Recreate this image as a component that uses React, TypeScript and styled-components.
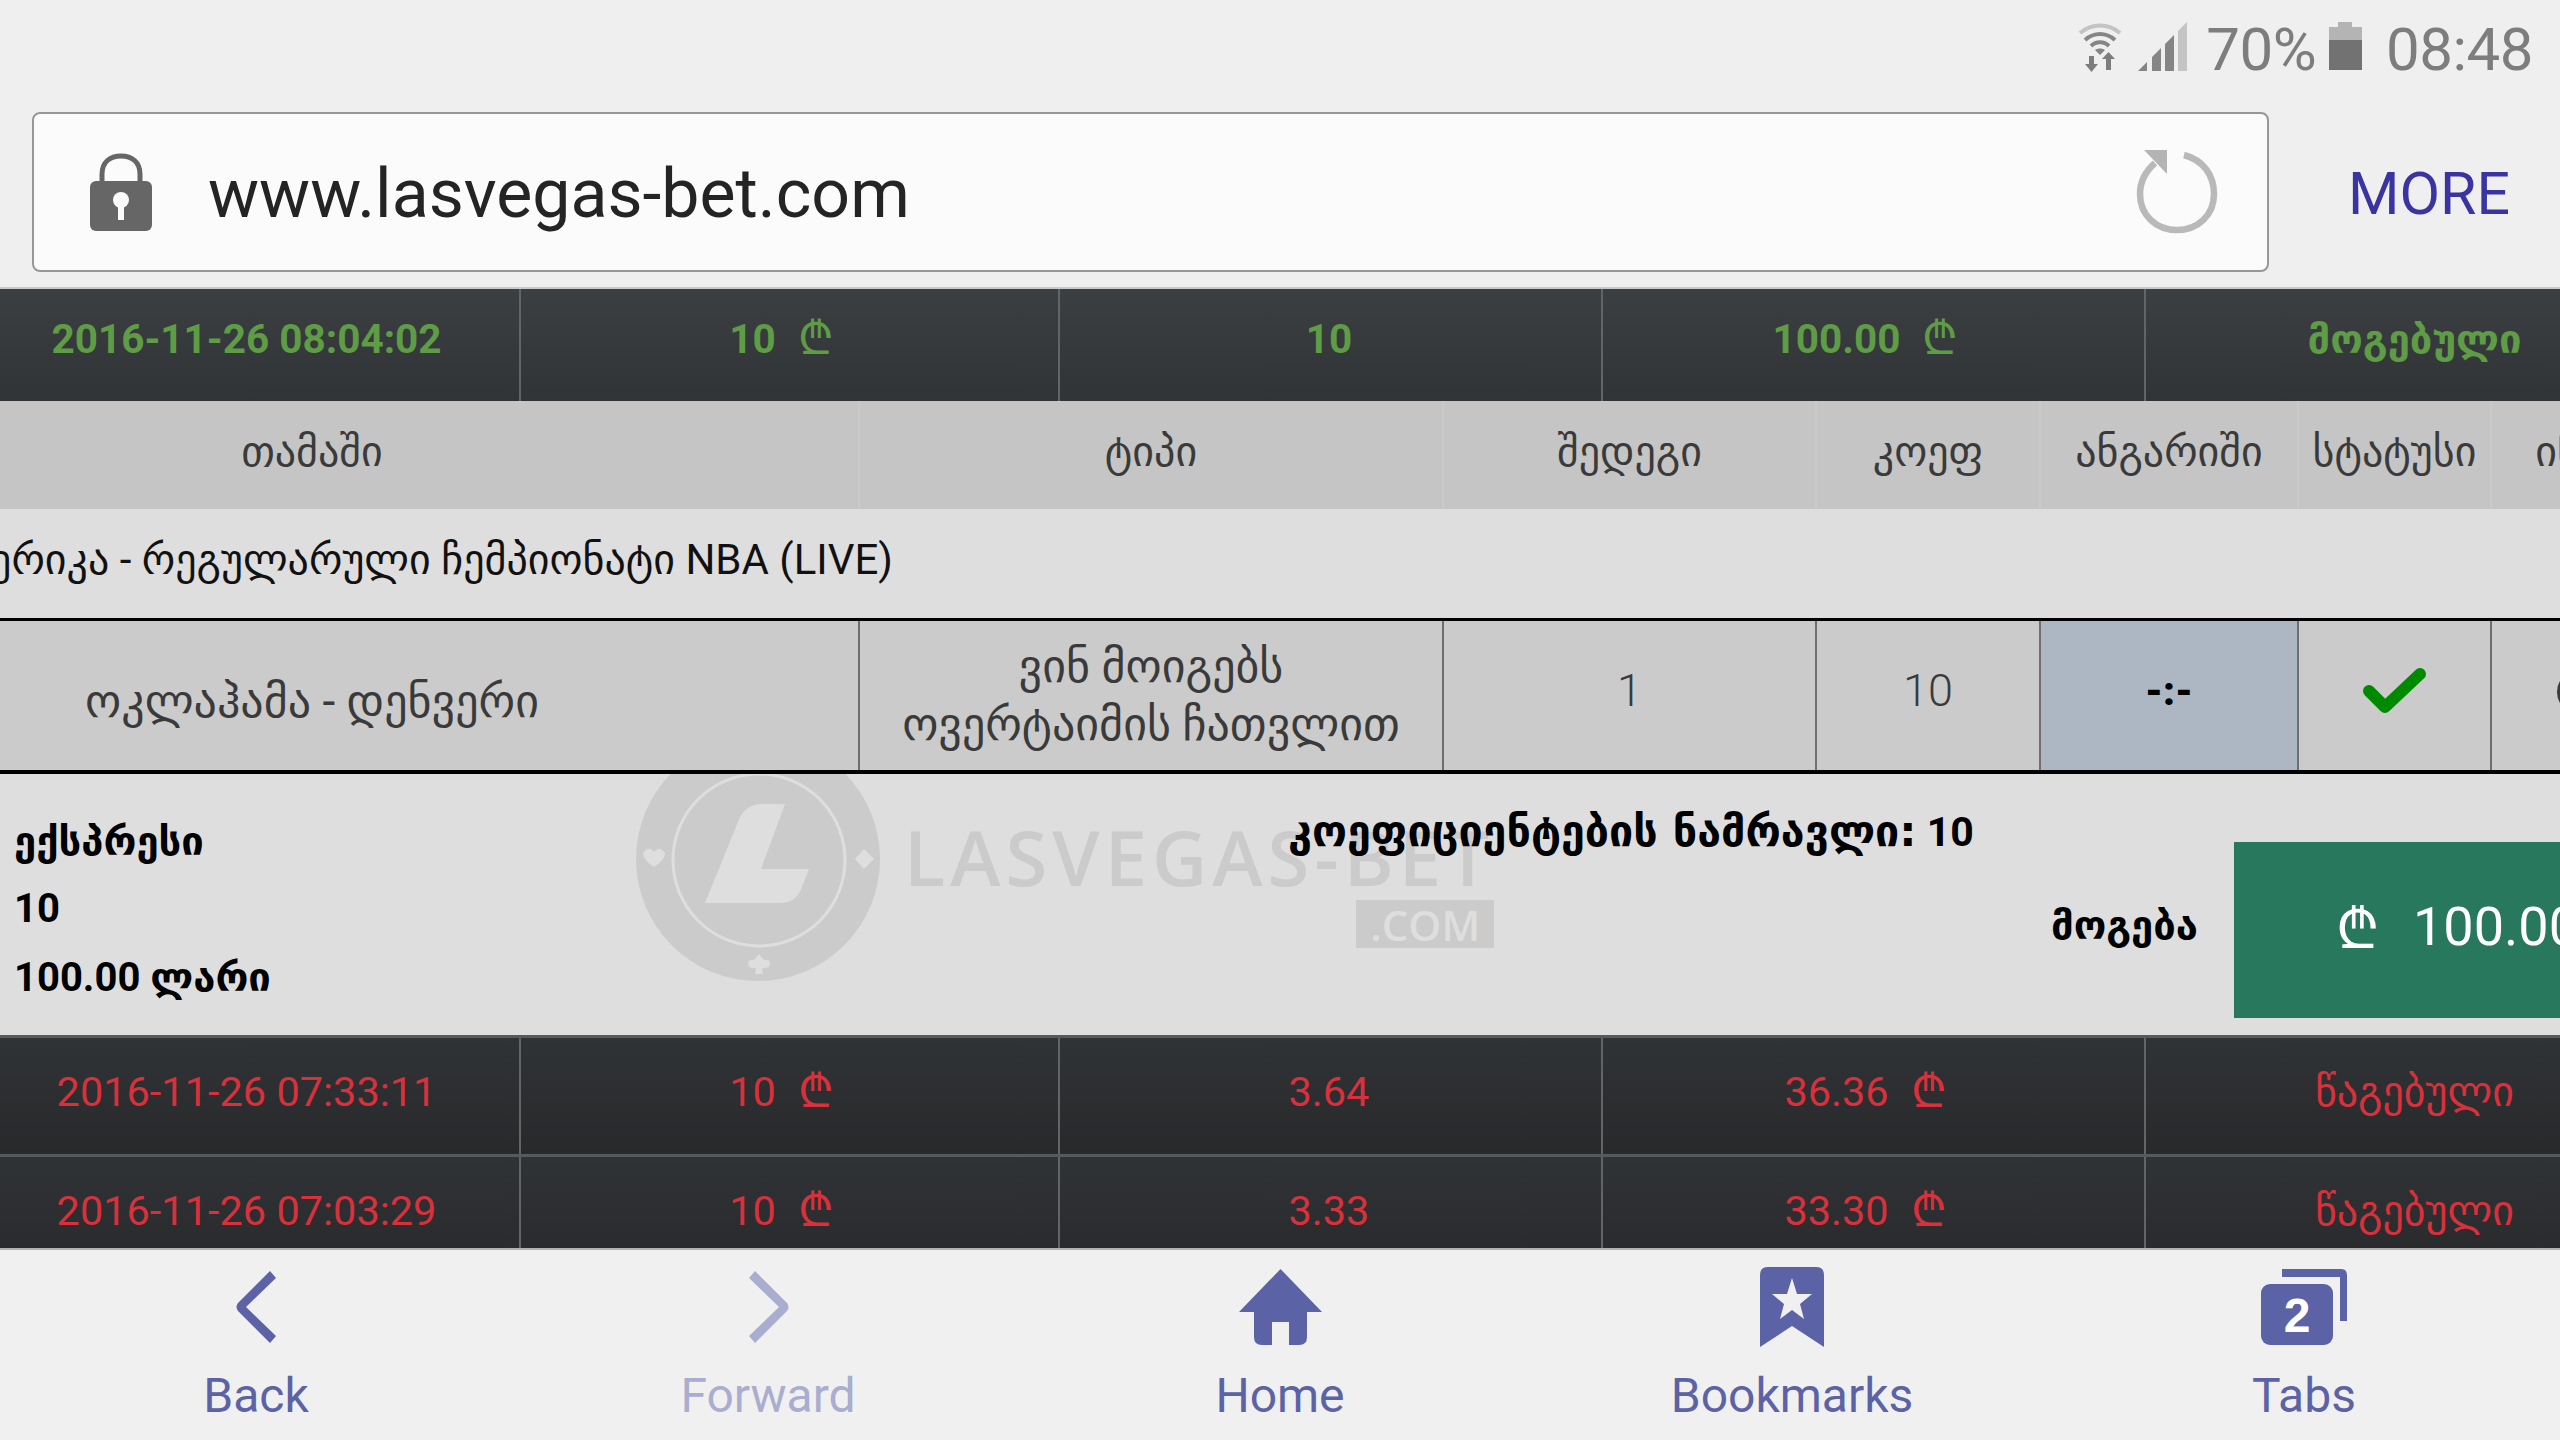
import React from "react";
import styled, { createGlobalStyle } from "styled-components";

const Global = createGlobalStyle`
  html, body { margin: 0; padding: 0; background: #efefef; }
  * { box-sizing: border-box; }
  body { font-family: Roboto, "DejaVu Sans", sans-serif; }
`;

const Page = styled.div`
  width: 2560px;
  height: 1440px;
  overflow: hidden;
  display: flex;
  flex-direction: column;
  background: #efefef;
`;

const StatusBar = styled.div`
  height: 112px;
  flex: none;
  display: flex;
  justify-content: flex-end;
  align-items: flex-start;
  padding: 22px 27px 0 0;
  color: #7d7d7d;
`;

const StatusSlot = styled.span<{ $gap: number }>`
  display: flex;
  margin-left: ${(p) => p.$gap}px;
`;

const StatusText = styled.span`
  font-size: 60px;
  line-height: 56px;
  font-weight: 400;
  letter-spacing: -0.5px;
`;

const AddressRow = styled.div`
  height: 175px;
  flex: none;
  padding: 0 50px 15px 32px;
  display: flex;
  align-items: stretch;
`;

const AddressBox = styled.div`
  width: 2237px;
  flex: none;
  display: flex;
  align-items: center;
  padding: 0 48px 0 56px;
  background: #fbfbfb;
  border: 2px solid #979797;
  border-radius: 8px;
`;

const Url = styled.span`
  flex: 1;
  margin-left: 56px;
  padding-top: 3px;
  font-size: 68px;
  color: #242424;
`;

const More = styled.span`
  margin-left: auto;
  align-self: center;
  padding-top: 2px;
  font-size: 59px;
  color: #3a34a2;
`;

const Table = styled.div`
  flex: 1;
  min-height: 0;
  overflow: hidden;
  display: flex;
  flex-direction: column;
`;

const Grid = styled.div<{ $cols: string; $offset: number }>`
  flex: none;
  display: grid;
  grid-template-columns: ${(p) => p.$cols};
  margin-left: ${(p) => p.$offset}px;
  width: max-content;
`;

const BetCols = "542px 539px 543px 543px 542px";
const MatchCols = "1092px 584px 373px 224px 258px 193px 200px";

const BetRow = styled(Grid)<{ $win?: boolean; $h: number; $topH: number }>`
  height: ${(p) => p.$h}px;
  min-width: 2900px;
  background: ${(p) =>
    p.$win
      ? "linear-gradient(#3c3f42, #313437)"
      : "linear-gradient(#303336, #28292b)"};
  border-top: ${(p) => p.$topH}px solid ${(p) => (p.$win ? "#c9c9c9" : "#58595b")};
  color: ${(p) => (p.$win ? "#5e9c45" : "#d8313b")};
  font-size: ${(p) => (p.$win ? 40.5 : 41.5)}px;
  font-weight: ${(p) => (p.$win ? 700 : 400)};
`;

const BetCell = styled.div<{ $top: number }>`
  display: flex;
  align-items: flex-start;
  justify-content: center;
  padding-top: ${(p) => p.$top}px;
  padding-right: 3px;
  line-height: 46px;
  white-space: nowrap;
  & + & {
    border-left: 2px solid #626466;
  }
`;

const Georgian = styled.span<{ $size: number }>`
  font-family: "DejaVu Sans", sans-serif;
  font-size: ${(p) => p.$size}px;
  font-weight: inherit;
`;

const Lari = styled.span`
  font-family: "DejaVu Sans", sans-serif;
  font-weight: 400;
  margin: -1px 14px 0 22px;
  font-size: 46px;
`;

const HeaderRow = styled(Grid)`
  height: 108px;
  background: #c5c5c5;
  color: #3a3a3a;
  font-family: "DejaVu Sans", sans-serif;
  font-size: 42px;
`;

const HeaderCell = styled.div`
  display: flex;
  align-items: center;
  justify-content: center;
  padding-bottom: 8px;
  white-space: nowrap;
  & + & {
    border-left: 2px solid #cacaca;
  }
`;

const LeagueRow = styled.div`
  height: 109px;
  flex: none;
  width: 893px;
  display: flex;
  justify-content: flex-end;
  align-items: center;
  padding-bottom: 8px;
  font-size: 42px;
  color: #111;
  white-space: nowrap;
`;

const LeagueBand = styled.div`
  flex: none;
  background: #dedede;
`;

const MatchRow = styled(Grid)`
  height: 156px;
  background: #cbcbcb;
  border-top: 3px solid #000;
  border-bottom: 4px solid #000;
  color: #3a3a3a;
  font-size: 40px;
`;

const MatchWrap = styled.div`
  flex: none;
  background: #000;
  position: relative;
  z-index: 1;
`;

const MatchCell = styled.div<{ $bg?: string }>`
  display: flex;
  align-items: center;
  justify-content: center;
  text-align: center;
  white-space: pre-line;
  line-height: 58px;
  background: ${(p) => p.$bg ?? "transparent"};
  & + & {
    border-left: 2px solid #6f6f6f;
  }
`;

const InfoCell = styled(MatchCell)`
  justify-content: flex-start;
  padding-left: 65px;
`;

const MatchName = styled.span`
  font-size: 46px;
  padding-top: 10px;
`;

const MarketName = styled.span`
  font-size: 46px;
  padding-bottom: 2px;
`;

const Numeric = styled.span`
  font-weight: 300;
  font-size: 45px;
  padding-bottom: 10px;
`;

const Score = styled.span`
  font-weight: 900;
  font-size: 40px;
  color: #000;
  padding-bottom: 8px;
`;

const InfoDot = styled.span`
  width: 44px;
  height: 44px;
  border: 4px solid #3a3a3a;
  border-radius: 50%;
  flex: none;
  margin-bottom: 8px;
`;

const Summary = styled.div`
  height: 261px;
  flex: none;
  position: relative;
  display: flex;
  background: #dedede;
  color: #000;
  overflow: hidden;
`;

const Watermark = styled.div`
  position: absolute;
  left: 636px;
  top: -37px;
  display: flex;
  color: #cbcbcb;
`;

const WatermarkCol = styled.div`
  display: flex;
  flex-direction: column;
  align-items: flex-end;
  margin-left: 24px;
  padding-top: 83px;
`;

const WatermarkName = styled.span`
  font-family: "Open Sans", sans-serif;
  font-weight: 600;
  font-size: 76px;
  line-height: 74px;
  letter-spacing: 5px;
`;

const WatermarkCom = styled.span`
  width: 138px;
  height: 48px;
  margin-top: 6px;
  background: #cbcbcb;
  color: #dedede;
  display: flex;
  align-items: center;
  justify-content: center;
  font-family: "Open Sans", sans-serif;
  font-weight: 600;
  font-size: 42px;
`;

const SummaryLeft = styled.div`
  width: 1288px;
  flex: none;
  padding: 33px 0 0 14px;
  display: flex;
  flex-direction: column;
  font-size: 40px;
  font-weight: 700;
  line-height: 68px;
  position: relative;
`;

const BoldGeorgian = styled.span<{ $size: number }>`
  font-family: "DejaVu Sans", sans-serif;
  font-weight: 700;
  font-size: ${(p) => p.$size}px;
`;

const SummaryMiddle = styled.div`
  width: 946px;
  flex: none;
  padding: 32px 36px 0 0;
  display: flex;
  flex-direction: column;
  position: relative;
  font-size: 41px;
  font-weight: 700;
  line-height: 50px;
`;

const Winnings = styled.span`
  margin-top: 43px;
  align-self: flex-end;
`;

const WinBox = styled.div`
  width: 600px;
  height: 176px;
  flex: none;
  margin-top: 68px;
  padding: 0 0 8px 102px;
  display: flex;
  align-items: center;
  background: #27785c;
  color: #fff;
  font-size: 54px;
  white-space: nowrap;
  position: relative;
`;

const WinLari = styled.span`
  font-family: "DejaVu Sans", sans-serif;
  font-size: 56px;
  margin-right: 34px;
`;

const Nav = styled.div`
  height: 192px;
  flex: none;
  display: grid;
  grid-template-columns: repeat(5, 512px);
  background: #f0f0f0;
  border-top: 2px solid #b2b2b2;
`;

const NavItem = styled.div<{ $dim?: boolean }>`
  display: flex;
  flex-direction: column;
  align-items: center;
  padding-top: 17px;
  color: ${(p) => (p.$dim ? "#a9adcf" : "#5b62a6")};
`;

const NavIcon = styled.div`
  height: 80px;
  display: flex;
  align-items: center;
  justify-content: center;
`;

const NavLabel = styled.span`
  margin-top: 21px;
  font-size: 48px;
  line-height: 56px;
`;

const TabsIcon = styled.div`
  position: relative;
  width: 86px;
  height: 76px;
`;

const TabsCount = styled.span`
  position: absolute;
  left: 0;
  bottom: 0;
  width: 72px;
  height: 60px;
  display: flex;
  align-items: center;
  justify-content: center;
  color: #fff;
  font-family: "Liberation Sans", sans-serif;
  font-weight: 700;
  font-size: 48px;
`;

const Wifi = () => (
  <svg width="44" height="50" viewBox="0 0 44 50">
    <path d="M2 11 C14 1 30 1 42 11" fill="none" stroke="#c4c4c4" strokeWidth="4" />
    <path d="M7 18 C16 10 28 10 37 18" fill="none" stroke="#858585" strokeWidth="4" />
    <path d="M13 24 C18 19 26 19 31 24" fill="none" stroke="#858585" strokeWidth="4" />
    <path d="M22 33 L17 28 C20 26 24 26 27 28 Z" fill="#858585" />
    <path d="M11 34 h5 v8 h4 l-6.500 8 l-6.500 -8 h4 Z M28 48 h5 v-11 h4 l-6.500 -7 l-6.500 7 h4 Z" fill="#7d7d7d" />
  </svg>
);

const Signal = () => (
  <svg width="50" height="49" viewBox="0 0 50 49">
    <path d="M0 49 L9 40 V49 Z M14 49 V35 L23 26 V49 Z M27 49 V22 L36 13 V49 Z" fill="#858585" />
    <path d="M40 49 V9 L49 0 V49 Z" fill="#c4c4c4" />
  </svg>
);

const Battery = () => (
  <svg width="33" height="48" viewBox="0 0 33 48">
    <path d="M9 0 H23 V5 H33 V18 H0 V5 H9 Z" fill="#b4b4b4" />
    <rect x="0" y="18" width="33" height="30" fill="#727272" />
  </svg>
);

const Lock = () => (
  <svg width="62" height="78" viewBox="0 0 62 78">
    <path d="M12 34 V21 C12 9 20 3 31 3 C42 3 50 9 50 21 V34" fill="none" stroke="#666" strokeWidth="5" />
    <rect x="0" y="28" width="62" height="50" rx="6" fill="#666" />
    <circle cx="31" cy="47" r="8" fill="#fbfbfb" />
    <rect x="28" y="47" width="6" height="20" fill="#fbfbfb" />
  </svg>
);

const Reload = () => (
  <svg width="84" height="86" viewBox="0 0 84 86">
    <path d="M49 6 C68 11 79 26 79 45 C79 66 63 81 42 81 C21 81 5 66 5 45 C5 32 11 22 20 14" fill="none" stroke="#b9b9b9" strokeWidth="6.500" />
    <path d="M32 1 V25 L9 1 Z" fill="#b4b4b4" />
  </svg>
);

const Back = () => (
  <svg width="42" height="72" viewBox="0 0 42 72">
    <path d="M34 0 L40 7 L10 36 L40 65 L34 72 L2 40 Q-1 36 2 32 Z" fill="currentColor" transform="translate(1 0)" />
  </svg>
);

const Forward = () => (
  <svg width="42" height="72" viewBox="0 0 42 72">
    <path d="M8 0 L2 7 L32 36 L2 65 L8 72 L40 40 Q43 36 40 32 Z" fill="currentColor" />
  </svg>
);

const Home = () => (
  <svg width="83" height="76" viewBox="0 0 83 76">
    <path d="M41.500 0 L83 43 H68 V68 Q68 76 60 76 H50 V53 H33 V76 H23 Q15 76 15 68 V43 H0 Z" fill="currentColor" />
  </svg>
);

const Bookmark = () => (
  <svg width="64" height="80" viewBox="0 0 64 80">
    <path
      fillRule="evenodd"
      d="M8 0 H56 Q64 0 64 8 V80 L32 59 L0 80 V8 Q0 0 8 0 Z M32 11 L37 27 L52 27 L40 37 L44 52 L32 43 L20 52 L24 37 L12 27 L27 27 Z"
      fill="currentColor"
    />
  </svg>
);

const TabsGlyph = () => (
  <svg width="86" height="76" viewBox="0 0 86 76" style={{ position: "absolute", inset: 0 }}>
    <path d="M21 0 H80 Q86 0 86 6 V52 H79 V8 H21 Z" fill="currentColor" />
    <rect x="0" y="15" width="72" height="61" rx="9" fill="currentColor" />
  </svg>
);

const Check = () => (
  <svg width="64" height="48" viewBox="0 0 64 48" style={{ marginBottom: 8 }}>
    <path d="M6 23 L22 39 L57 6" fill="none" stroke="#008a00" strokeWidth="12" strokeLinecap="round" strokeLinejoin="round" />
  </svg>
);

const LogoMark = () => (
  <svg width="244" height="244" viewBox="0 0 244 244">
    <circle cx="122" cy="122" r="122" fill="#cbcbcb" />
    <circle cx="123" cy="123" r="86" fill="none" stroke="#dedede" strokeWidth="3" />
    <path d="M149 67 H125 Q108 68 102 85 L69 166 H145 Q160 166 166 150 L173 132 H125 Z" fill="#dedede" />
    <path d="M7 116 Q13 108 18 115 Q23 108 29 116 Q29 123 18 130 Q7 123 7 116 Z" fill="#dedede" />
    <path d="M228 112 L238 122 L228 132 L219 122 Z" fill="#dedede" />
    <path d="M123 217 l5 6 q6 -1 6 4 q-1 5 -8 4 l1 6 h-8 l1 -6 q-7 1 -8 -4 q0 -5 6 -4 Z" fill="#dedede" />
  </svg>
);

const Money = ({ v }: { v: string }) => (
  <>
    {v}
    <Lari>₾</Lari>
  </>
);

const bets = [
  { date: "2016-11-26 07:33:11", k: "3.64", sum: "36.36" },
  { date: "2016-11-26 07:03:29", k: "3.33", sum: "33.30" },
];

const navItems = [
  { label: "Back", icon: <Back /> },
  { label: "Forward", icon: <Forward />, dim: true },
  { label: "Home", icon: <Home /> },
  { label: "Bookmarks", icon: <Bookmark /> },
  {
    label: "Tabs",
    icon: (
      <TabsIcon>
        <TabsGlyph />
        <TabsCount>2</TabsCount>
      </TabsIcon>
    ),
  },
];

export default function App() {
  return (
    <Page>
      <Global />
      <StatusBar>
        <Wifi />
        <StatusSlot $gap={16}><Signal /></StatusSlot>
        <StatusSlot $gap={18}><StatusText>70%</StatusText></StatusSlot>
        <StatusSlot $gap={13}><Battery /></StatusSlot>
        <StatusSlot $gap={24}><StatusText>08:48</StatusText></StatusSlot>
      </StatusBar>
      <AddressRow>
        <AddressBox>
          <Lock />
          <Url>www.lasvegas-bet.com</Url>
          <Reload />
        </AddressBox>
        <More>MORE</More>
      </AddressRow>
      <Table>
        <BetRow $win $cols={BetCols} $offset={-23} $h={114} $topH={2}>
          <BetCell $top={27}>2016-11-26 08:04:02</BetCell>
          <BetCell $top={27}><Money v="10" /></BetCell>
          <BetCell $top={27}>10</BetCell>
          <BetCell $top={27}><Money v="100.00" /></BetCell>
          <BetCell $top={27}><Georgian $size={40}>მოგებული</Georgian></BetCell>
        </BetRow>
        <HeaderRow $cols={MatchCols} $offset={-234}>
          <HeaderCell>თამაში</HeaderCell>
          <HeaderCell>ტიპი</HeaderCell>
          <HeaderCell>შედეგი</HeaderCell>
          <HeaderCell>კოეფ</HeaderCell>
          <HeaderCell>ანგარიში</HeaderCell>
          <HeaderCell>სტატუსი</HeaderCell>
          <HeaderCell>ინფო</HeaderCell>
        </HeaderRow>
        <LeagueBand>
          <LeagueRow>ამერიკა - რეგულარული ჩემპიონატი NBA (LIVE)</LeagueRow>
        </LeagueBand>
        <MatchWrap>
          <MatchRow $cols={MatchCols} $offset={-234}>
            <MatchCell><MatchName>ოკლაჰამა - დენვერი</MatchName></MatchCell>
            <MatchCell><MarketName>{"ვინ მოიგებს\nოვერტაიმის ჩათვლით"}</MarketName></MatchCell>
            <MatchCell><Numeric>1</Numeric></MatchCell>
            <MatchCell><Numeric>10</Numeric></MatchCell>
            <MatchCell $bg="#adb7c3"><Score>-:-</Score></MatchCell>
            <MatchCell><Check /></MatchCell>
            <InfoCell><InfoDot /></InfoCell>
          </MatchRow>
        </MatchWrap>
        <Summary>
          <Watermark>
            <LogoMark />
            <WatermarkCol>
              <WatermarkName>LASVEGAS-BET</WatermarkName>
              <WatermarkCom>.COM</WatermarkCom>
            </WatermarkCol>
          </Watermark>
          <SummaryLeft>
            <BoldGeorgian $size={40}>ექსპრესი</BoldGeorgian>
            <span>10</span>
            <span>100.00 <BoldGeorgian $size={40}>ლარი</BoldGeorgian></span>
          </SummaryLeft>
          <SummaryMiddle>
            <span><BoldGeorgian $size={43}>კოეფიციენტების ნამრავლი:</BoldGeorgian> 10</span>
            <Winnings><BoldGeorgian $size={40}>მოგება</BoldGeorgian></Winnings>
          </SummaryMiddle>
          <WinBox>
            <WinLari>₾</WinLari>100.00
          </WinBox>
        </Summary>
        {bets.map((b) => (
          <BetRow key={b.date} $cols={BetCols} $offset={-23} $h={119} $topH={3}>
            <BetCell $top={31}>{b.date}</BetCell>
            <BetCell $top={31}><Money v="10" /></BetCell>
            <BetCell $top={31}>{b.k}</BetCell>
            <BetCell $top={31}><Money v={b.sum} /></BetCell>
            <BetCell $top={31}><Georgian $size={42}>წაგებული</Georgian></BetCell>
          </BetRow>
        ))}
      </Table>
      <Nav>
        {navItems.map((n) => (
          <NavItem key={n.label} $dim={n.dim}>
            <NavIcon>{n.icon}</NavIcon>
            <NavLabel>{n.label}</NavLabel>
          </NavItem>
        ))}
      </Nav>
    </Page>
  );
}
